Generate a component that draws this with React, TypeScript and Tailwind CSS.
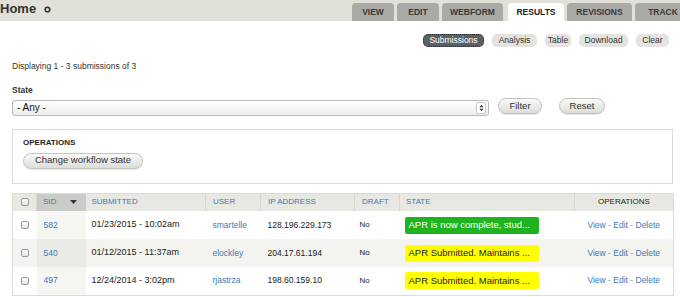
import React from 'react';

interface Submission {
  sid: string;
  submitted: string;
  user: string;
  ip: string;
  draft: string;
  state: string;
  color: 'green' | 'yellow';
}

const rows: Submission[] = [
  { sid: '582', submitted: '01/23/2015 - 10:02am', user: 'smartelle', ip: '128.196.229.173', draft: 'No', state: 'APR is now complete, stud...', color: 'green' },
  { sid: '540', submitted: '01/12/2015 - 11:37am', user: 'elockley', ip: '204.17.61.194', draft: 'No', state: 'APR Submitted. Maintains ...', color: 'yellow' },
  { sid: '497', submitted: '12/24/2014 - 3:02pm', user: 'rjastrza', ip: '198.60.159.10', draft: 'No', state: 'APR Submitted. Maintains ...', color: 'yellow' },
];

// widths + left gaps measured off the screenshot
const tabs = [
  { label: 'VIEW', cls: 'w-[42px]' },
  { label: 'EDIT', cls: 'w-[42px] ml-[3px]' },
  { label: 'WEBFORM', cls: 'w-[61px] ml-[3px]' },
  { label: 'RESULTS', cls: 'w-[56px] ml-[5px]', active: true },
  { label: 'REVISIONS', cls: 'w-[65px] ml-[3px]' },
  { label: 'TRACK', cls: 'w-[56px] ml-[3px]' },
];

const subTabs = [
  { label: 'Submissions', w: 'w-[61px]', active: true },
  { label: 'Analysis', w: 'w-[45px]' },
  { label: 'Table', w: 'w-[26px]' },
  { label: 'Download', w: 'w-[49px]' },
  { label: 'Clear', w: 'w-[33px]' },
];

const Checkbox = () => (
  <span className="inline-block w-[8px] h-[8px] rounded-[2px] border border-[#9a9a9a] bg-gradient-to-b from-white to-[#e4e4e4]" />
);

const Button = ({ children, className }: { children: React.ReactNode; className: string }) => (
  <span
    className={`flex items-center justify-center h-[16px] rounded-full border border-[#c4c4c0] bg-gradient-to-b from-[#fafafa] to-[#dcdcd8] text-[9.5px] text-[#333] shadow-[0_1px_0_#e6e6e6] ${className}`}
  >
    {children}
  </span>
);

export default function App() {
  return (
    <div className="w-[680px] h-[297px] overflow-hidden bg-white text-[#333] font-['Liberation_Sans',Arial,sans-serif]">
      {/* top bar with tabs */}
      <div className="flex items-end h-[21px] bg-[#e1e0d9] overflow-hidden">
        <div className="flex items-center self-start h-[17px] w-[352px] shrink-0">
          <span className="text-[13px] font-bold text-[#333] leading-none">Home</span>
          <svg className="ml-[8px] mt-[2px]" width="7" height="7" viewBox="0 0 7 7">
            <circle cx="3.5" cy="3.5" r="2.3" fill="none" stroke="#333" strokeWidth="1.6" />
          </svg>
        </div>
        <div className="flex shrink-0">
          {tabs.map((t) => (
            <div
              key={t.label}
              className={`${t.cls} shrink-0 h-[18px] rounded-t-[4px] flex items-center justify-center text-[8.5px] font-bold ${
                t.active ? 'bg-white text-[#222]' : 'bg-[#a9a9a5] text-[#3a3a3a]'
              }`}
            >
              {t.label}
            </div>
          ))}
        </div>
      </div>

      {/* secondary tabs */}
      <div className="flex justify-end gap-[8px] pr-[11px] mt-[13px]">
        {subTabs.map((s) => (
          <span
            key={s.label}
            className={`${s.w} h-[13px] rounded-[5px] flex items-center justify-center text-[8.5px] ${
              s.active
                ? 'bg-[#5b5f66] text-white border border-dotted border-[#2a2a2a]'
                : 'bg-[#e3e3df] text-[#333]'
            }`}
          >
            {s.label}
          </span>
        ))}
      </div>

      <div className="px-[12px]">
        <div className="mt-[13px] text-[8.5px] text-[#333]">Displaying 1 - 3 submissions of 3</div>

        <div className="mt-[11px] text-[8.5px] font-bold text-[#333]">State</div>

        <div className="flex items-center mt-[3px]">
          <div className="flex items-center w-[477px] h-[16px] border border-[#b9b9b9] rounded-[3px] bg-gradient-to-b from-white to-[#ececec]">
            <span className="pl-[4px] text-[10px] text-[#111] flex-1">- Any -</span>
            <span className="flex items-center justify-center w-[10px] h-[12px] mr-[2px] border border-[#c8c8c8] rounded-[2px] bg-white">
              <svg width="5" height="8" viewBox="0 0 6 10">
                <path d="M3 1 L5.5 4 L0.5 4 Z" fill="#333" />
                <path d="M3 9 L5.5 6 L0.5 6 Z" fill="#333" />
              </svg>
            </span>
          </div>
          <Button className="w-[44px] ml-[9px] mt-[-3px]">Filter</Button>
          <Button className="w-[46px] ml-[17px] mt-[-3px]">Reset</Button>
        </div>

        {/* operations fieldset */}
        <div className="mt-[13px] w-[661px] h-[55px] border border-[#dcdcd6] px-[10px] pt-[7px]">
          <div className="text-[8px] font-bold text-[#222]">OPERATIONS</div>
          <Button className="w-[120px] mt-[4px]">Change workflow state</Button>
        </div>

        {/* table */}
        <table className="mt-[9px] w-[661px] border-collapse border border-[#dcdcd6] text-[8.5px] table-fixed">
          <colgroup>
            <col className="w-[24px]" />
            <col className="w-[49px]" />
            <col className="w-[120px]" />
            <col className="w-[55px]" />
            <col className="w-[94px]" />
            <col className="w-[45px]" />
            <col className="w-[175px]" />
            <col className="w-[99px]" />
          </colgroup>
          <thead>
            <tr className="h-[18px] bg-[#e8e8e3] text-[8px] text-left">
              <th className="font-normal text-center border-r border-[#d8d8d2]">
                <span className="flex justify-center"><Checkbox /></span>
              </th>
              <th className="font-normal bg-[#cbcbc7] text-[#3b7bb8] pl-[6px]">
                <span className="flex items-center justify-between pr-[9px]">
                  SID
                  <svg width="7" height="4" viewBox="0 0 7 4"><path d="M0 0 L7 0 L3.5 4 Z" fill="#333" /></svg>
                </span>
              </th>
              <th className="font-normal text-[#3b7bb8] pl-[6px] border-r border-[#d8d8d2]">SUBMITTED</th>
              <th className="font-normal text-[#3b7bb8] pl-[7px] border-r border-[#d8d8d2]">USER</th>
              <th className="font-normal text-[#3b7bb8] pl-[7px] border-r border-[#d8d8d2]">IP ADDRESS</th>
              <th className="font-normal text-[#3b7bb8] pl-[7px] border-r border-[#d8d8d2]">DRAFT</th>
              <th className="font-normal text-[#3b7bb8] pl-[6px] border-r border-[#d8d8d2]">STATE</th>
              <th className="font-normal text-[#222] text-center">OPERATIONS</th>
            </tr>
          </thead>
          <tbody>
            {rows.map((r, i) => (
              <tr key={r.sid} className={`h-[28px] ${i % 2 === 1 ? 'bg-[#f3f3ef]' : 'bg-white'}`}>
                <td>
                  <span className="flex justify-center"><Checkbox /></span>
                </td>
                <td className={`pl-[7px] text-[#3b7bb8] ${i % 2 === 1 ? 'bg-[#ebebe6]' : 'bg-[#f5f5f2]'}`}>{r.sid}</td>
                <td className="pl-[6px] text-[#222] text-[9px]">{r.submitted}</td>
                <td className="pl-[7px] text-[#3b7bb8]">{r.user}</td>
                <td className="pl-[7px] text-[#222]">{r.ip}</td>
                <td className="pl-[5px] text-[#222] text-[8px]">{r.draft}</td>
                <td className="pl-[5px]">
                  <span
                    className={`flex items-center w-[134px] h-[17px] rounded-[2px] pl-[4px] text-[9.5px] ${
                      r.color === 'green' ? 'bg-[#1fb31f] text-white' : 'bg-[#ffff00] text-[#222]'
                    }`}
                  >
                    {r.state}
                  </span>
                </td>
                <td className="text-center text-[#3b7bb8]">
                  View <span className="text-[#888]">-</span> Edit <span className="text-[#888]">-</span> Delete
                </td>
              </tr>
            ))}
          </tbody>
        </table>
      </div>
    </div>
  );
}
